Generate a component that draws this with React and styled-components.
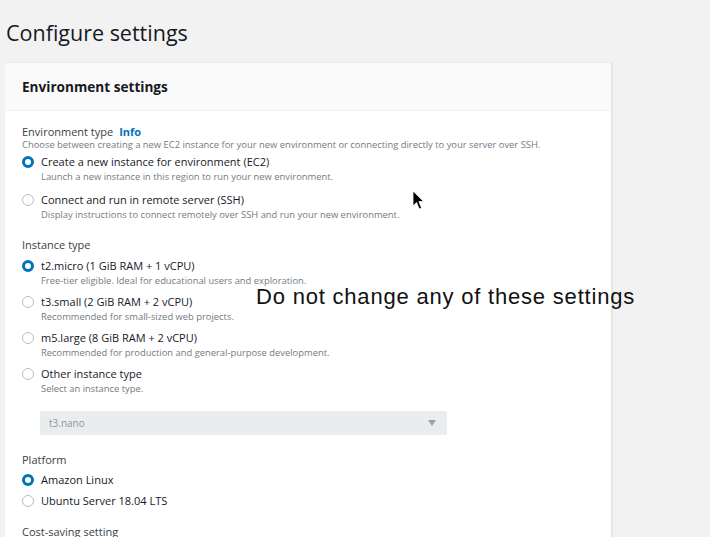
import React from "react";
import styled, { createGlobalStyle } from "styled-components";

const GlobalStyle = createGlobalStyle`
  html, body {
    margin: 0;
    padding: 0;
    background: #f2f2f2;
  }
  body {
    font-family: "Open Sans", "Noto Sans", sans-serif;
    color: #16191f;
  }
`;

const Page = styled.div`
  position: relative;
  width: 710px;
  height: 537px;
  overflow: hidden;
  padding: 19px 0 0 5px;
  box-sizing: border-box;
`;

const PageTitle = styled.h1`
  margin: 0 0 15px 1px;
  font-size: 21.5px;
  line-height: 28px;
  font-weight: 400;
  color: #16191f;
`;

const Card = styled.div`
  width: 606px;
  background: #ffffff;
  border-top: 1px solid #ececec;
  box-shadow: 2px 0 0 #e6e6e6;
`;

const CardHeader = styled.div`
  height: 47px;
  display: flex;
  align-items: center;
  padding: 0 17px;
  background: #fafafa;
  border-bottom: 1px solid #eeeeee;
  font-size: 13.6px;
  font-weight: 700;
  color: #16191f;
`;

const CardBody = styled.div`
  padding: 14px 17px 0;
  display: flex;
  flex-direction: column;
`;

const Field = styled.div`
  display: flex;
  flex-direction: column;
  margin-bottom: ${(p) => p.$after || 0}px;
`;

const FieldLabel = styled.div`
  font-size: 11px;
  line-height: 14px;
  color: #3a3f45;
  white-space: nowrap;
  a {
    color: #0073bb;
    font-weight: 700;
    margin-left: 6px;
    text-decoration: none;
  }
`;

const FieldDesc = styled.div`
  font-size: 9.4px;
  line-height: 12px;
  color: #747b82;
  white-space: nowrap;
`;

const RadioGroup = styled.div`
  display: flex;
  flex-direction: column;
  gap: ${(p) => p.$gap}px;
  margin-top: ${(p) => p.$top}px;
`;

const RadioRow = styled.label`
  display: flex;
  align-items: flex-start;
  gap: 7px;
`;

const RadioDot = styled.span`
  flex: none;
  width: 12px;
  height: 12px;
  margin-top: 2px;
  border-radius: 50%;
  box-sizing: border-box;
  background: #fff;
  border: ${(p) => (p.$on ? "3.5px solid #0073bb" : "1px solid #b7c0c2")};
`;

const OptionText = styled.div`
  display: flex;
  flex-direction: column;
  white-space: nowrap;
`;

const OptionLabel = styled.span`
  font-size: 11px;
  line-height: 16px;
  color: #16191f;
`;

const OptionSub = styled.span`
  font-size: 9.4px;
  line-height: 13px;
  color: #747b82;
`;

const SelectBox = styled.div`
  margin: 16px 0 0 18px;
  width: 407px;
  height: 24px;
  box-sizing: border-box;
  padding: 0 9px;
  display: flex;
  align-items: center;
  justify-content: space-between;
  background: #eaeded;
  border-radius: 2px;
  font-size: 10px;
  color: #8e9799;
`;

const Caret = styled.span`
  width: 0;
  height: 0;
  margin-right: 2px;
  border-left: 4px solid transparent;
  border-right: 4px solid transparent;
  border-top: 6px solid #9aa2a4;
`;

const Note = styled.div`
  position: absolute;
  left: 256px;
  top: 283px;
  font-family: "Liberation Sans", Arial, sans-serif;
  font-size: 22px;
  line-height: 28px;
  letter-spacing: 0.8px;
  color: #111111;
  white-space: nowrap;
`;

const Cursor = styled.svg`
  position: absolute;
  left: 412px;
  top: 190px;
`;

const Radio = ({ on, label, sub }) => (
  <RadioRow>
    <RadioDot $on={on} />
    <OptionText>
      <OptionLabel>{label}</OptionLabel>
      {sub && <OptionSub>{sub}</OptionSub>}
    </OptionText>
  </RadioRow>
);

export default function App() {
  return (
    <Page>
      <GlobalStyle />
      <PageTitle>Configure settings</PageTitle>
      <Card>
        <CardHeader>Environment settings</CardHeader>
        <CardBody>
          <Field $after={17}>
            <FieldLabel>
              Environment type<a href="#">Info</a>
            </FieldLabel>
            <FieldDesc>
              Choose between creating a new EC2 instance for your new environment or connecting directly to your server over SSH.
            </FieldDesc>
            <RadioGroup $gap={9} $top={3}>
              <Radio
                on
                label="Create a new instance for environment (EC2)"
                sub="Launch a new instance in this region to run your new environment."
              />
              <Radio
                label="Connect and run in remote server (SSH)"
                sub="Display instructions to connect remotely over SSH and run your new environment."
              />
            </RadioGroup>
          </Field>

          <Field $after={18}>
            <FieldLabel>Instance type</FieldLabel>
            <RadioGroup $gap={7} $top={6}>
              <Radio
                on
                label="t2.micro (1 GiB RAM + 1 vCPU)"
                sub="Free-tier eligible. Ideal for educational users and exploration."
              />
              <Radio
                label="t3.small (2 GiB RAM + 2 vCPU)"
                sub="Recommended for small-sized web projects."
              />
              <Radio
                label="m5.large (8 GiB RAM + 2 vCPU)"
                sub="Recommended for production and general-purpose development."
              />
              <Radio label="Other instance type" sub="Select an instance type." />
            </RadioGroup>
            <SelectBox>
              <span>t3.nano</span>
              <Caret />
            </SelectBox>
          </Field>

          <Field $after={16}>
            <FieldLabel>Platform</FieldLabel>
            <RadioGroup $gap={5} $top={5}>
              <Radio on label="Amazon Linux" />
              <Radio label="Ubuntu Server 18.04 LTS" />
            </RadioGroup>
          </Field>

          <Field>
            <FieldLabel>Cost-saving setting</FieldLabel>
          </Field>
        </CardBody>
      </Card>

      <Note>Do not change any of these settings</Note>
      <Cursor width="13" height="21" viewBox="0 0 13 21">
        <path d="M1 1 L1 16 L4.5 12.5 L7.3 19 L9.6 18 L6.9 11.6 L11.6 11.6 Z" fill="#000" stroke="#fff" strokeWidth="0.8" />
      </Cursor>
    </Page>
  );
}
